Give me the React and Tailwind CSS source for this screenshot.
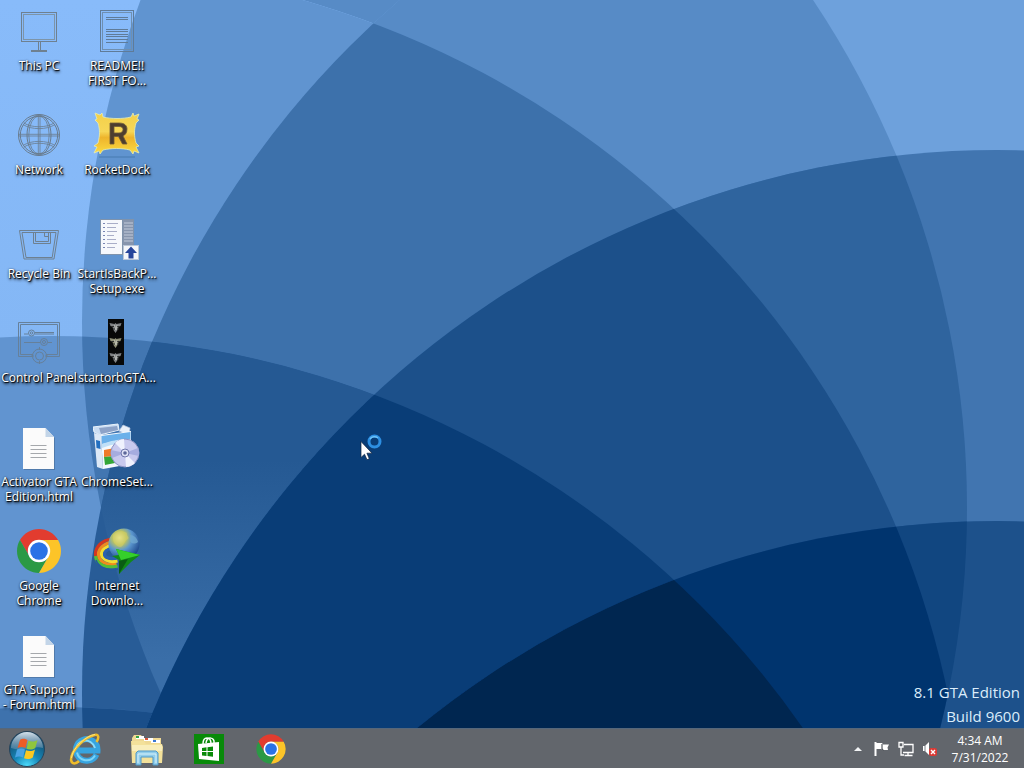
import { useId } from "react"

// big overlapping discs of the wallpaper, one stack leans in from each side
const DISCS = {
    leftTop: [52, 508],
    leftMid: [52, 880],
    leftLow: [52, 1251],
    leftEnd: [52, 1622],
    rightTop: [997, 322],
    rightHigh: [997, 693],
    rightMid: [997, 1065],
    rightLow: [997, 1436],
}

// painted back to front, every entry fills the overlap of its discs
const REGIONS = [
    [["rightTop"], "#6ea1dc"],
    [["leftTop"], "#86b9f8"],
    [["leftTop", "rightTop"], "#578bc6"],
    [["leftTop", "leftMid"], "url(#skyLeft)"],
    [["leftTop", "leftMid", "rightTop"], "#6094d0"],
    [["rightTop", "rightHigh"], "#6ea1dc"],
    [["leftTop", "rightTop", "rightHigh"], "#578bc6"],
    [["leftTop", "leftMid", "rightTop", "rightHigh"], "#3d71ab"],
    [["leftLow"], "#6194d0"],
    [["leftLow", "rightTop"], "#4276b1"],
    [["leftLow", "rightHigh"], "#285c97"],
    [["leftLow", "rightTop", "rightHigh"], "url(#lowWedge)"],
    [["leftEnd"], "#3e72ad"],
    [["leftEnd", "rightHigh"], "#1a4e89"],
    [["rightMid"], "#4175b0"],
    [["rightMid", "leftTop"], "#2f649e"],
    [["rightMid", "leftTop", "leftMid"], "#1c508a"],
    [["rightMid", "leftLow"], "#093d77"],
    [["rightLow"], "#1d518b"],
    [["rightLow", "leftTop"], "#114680"],
    [["rightLow", "leftTop", "leftMid"], "#00346e"],
    [["rightLow", "leftLow"], "#002650"],
]

function Overlap({ discs, fill }) {
    const [first, ...rest] = discs
    const [cx, cy] = DISCS[first]
    return rest.reduce(
        (inner, name) => <g clipPath={`url(#clip-${name})`}>{inner}</g>,
        <circle cx={cx} cy={cy} r="915" fill={fill} />
    )
}

function Wallpaper() {
    return (
        <svg
            className="absolute inset-0 h-full w-full"
            viewBox="0 0 1024 728"
            preserveAspectRatio="xMidYMid slice"
            aria-hidden="true"
        >
            <defs>
                {Object.entries(DISCS).map(([name, [cx, cy]]) => (
                    <clipPath key={name} id={`clip-${name}`}>
                        <circle cx={cx} cy={cy} r="915" />
                    </clipPath>
                ))}
                <linearGradient id="skyLeft" gradientUnits="userSpaceOnUse" x1="0" y1="0" x2="0" y2="340">
                    <stop offset="0" stopColor="#88bbfa" />
                    <stop offset="1" stopColor="#84b7f5" />
                </linearGradient>
                <linearGradient id="lowWedge" gradientUnits="userSpaceOnUse" x1="0" y1="460" x2="0" y2="660">
                    <stop offset="0" stopColor="#255993" />
                    <stop offset="1" stopColor="#3a6ea8" />
                </linearGradient>
            </defs>
            <rect width="1024" height="728" fill="#86b9f7" />
            {REGIONS.map(([discs, fill]) => (
                <Overlap key={discs.join()} discs={discs} fill={fill} />
            ))}
        </svg>
    )
}

/* ---------- desktop icons, all on a 48px grid ---------- */

function PcIcon() {
    return (
        <svg viewBox="0 0 48 48" className="h-12 w-12" fill="none" stroke="#6e8090">
            <rect x="6.500" y="5.500" width="35" height="29" />
            <rect x="8.500" y="7.500" width="31" height="25" stroke="#7d94a8" />
            <path d="M23.500 35v8M25.500 35v8M16 43.500h16M16 44.500h16" />
        </svg>
    )
}

function ReadmeIcon() {
    return (
        <svg viewBox="0 0 48 48" className="h-12 w-12" fill="none" stroke="#5f7b98">
            <rect x="7.500" y="3.500" width="33" height="41" />
            <rect x="9.500" y="5.500" width="29" height="37" stroke="#6f8fb0" />
            <path d="M13 10.500h22M13 12.500h22M13 22.500h22M13 24.500h22M13 27.500h22M13 29.500h22M13 32.500h22M13 35.500h22" />
        </svg>
    )
}

function NetworkIcon() {
    return (
        <svg viewBox="0 0 48 48" className="h-12 w-12" fill="none" stroke="#697c8e">
            <circle cx="24" cy="24" r="20.500" />
            <circle cx="24" cy="24" r="18.700" />
            <ellipse cx="24" cy="24" rx="12" ry="20" />
            <ellipse cx="24" cy="24" rx="10.200" ry="19" strokeWidth=".8" />
            <path d="M23.300 4v40M25 4v40M4 23.300h40M4 25h40" strokeWidth=".8" />
            <path d="M9 12c7 5 23 5 30 0M8 13.500c8 5.500 24 5.500 32 0M9 36c7-5 23-5 30 0M8 34.500c8-5.500 24-5.500 32 0" strokeWidth=".8" />
        </svg>
    )
}

function RecycleIcon() {
    return (
        <svg viewBox="0 0 48 48" className="h-12 w-12" fill="none" stroke="#6e8090">
            <path d="M4.500 15.500h39L39 44H9z" />
            <path d="M7 17.500h34l-3.800 25H11z" />
            <path d="M18.500 17.500v11h17v-11M20.500 17.500v9h13v-9M29.500 17.500v4h4" />
        </svg>
    )
}

function ControlIcon() {
    return (
        <svg viewBox="0 0 48 48" className="h-12 w-12" fill="none" stroke="#66809a">
            <path d="M18 37.500H3.500v-34h41v34H31M18 35.500H5.500v-30h37v30H31" />
            <path d="M20 13.500h19M9 15h4M20 15h19M9 23.500h16M33 23.500h4" />
            <circle cx="16.500" cy="14" r="3" />
            <circle cx="16.500" cy="14" r="1.200" />
            <circle cx="29" cy="23" r="3.500" />
            <circle cx="29" cy="23" r="1.500" />
            <circle cx="24.500" cy="37" r="7" />
            <circle cx="24.500" cy="37" r="4" />
            <path d="M24.500 28v3M24.500 42v3M16 37h3M30 37h3" />
        </svg>
    )
}

function HtmlIcon() {
    return (
        <svg viewBox="0 0 48 48" className="h-12 w-12">
            <path d="M9 6h21.500l9.500 9v32H9z" fill="#3f5f85" opacity=".5" />
            <path d="M8 5h22.500l8.500 9v32H8z" fill="#fbfbfb" />
            <path d="M30.500 5v9H39z" fill="#c3d5e8" />
            <path d="M15.500 22.500h16M15.500 26.500h16M15.500 30.500h16M15.500 34.500h16" stroke="#a5a8ac" />
        </svg>
    )
}

function ChromeIcon({ className }) {
    return (
        <svg viewBox="0 0 48 48" className={className}>
            <path d="M4.950 13A22 22 0 0 1 43.050 13H24A11 11 0 0 0 14.470 29.500z" fill="#e23c2f" />
            <path d="M4.950 13A22 22 0 0 0 24 46l9.530-16.500a11 11 0 0 1-19.060 0z" fill="#2b9945" />
            <path d="M43.050 13A22 22 0 0 1 24 46l9.530-16.500A11 11 0 0 0 24 13z" fill="#fcc428" />
            <circle cx="24" cy="24" r="11.200" fill="#fff" />
            <circle cx="24" cy="24" r="8.800" fill="#2a72e6" />
        </svg>
    )
}

function RocketDockIcon() {
    const id = useId()
    return (
        <svg viewBox="0 0 48 48" className="h-12 w-12">
            <defs>
                <linearGradient id={id} x1="0" y1="0" x2="0" y2="1">
                    <stop offset="0" stopColor="#f3d04a" />
                    <stop offset=".45" stopColor="#f7d757" />
                    <stop offset=".6" stopColor="#eeb42c" />
                    <stop offset="1" stopColor="#fbdc42" />
                </linearGradient>
            </defs>
            <path d="M6 46h36" stroke="#477ab0" />
            <path
                d="M2 2l5 2 2-2 1 4c8 2 20 2 28 0l2-4 1 3 5-2-2 5 2 1-3 3c-2 7-2 13 0 20l3 3-3 1 3 6-5-2-1 3-3-4c-8-2-19-2-27 0l-3 4-1-3-5 2 3-6-3-1 4-3c2-8 2-13 0-20L2 9l2-1z"
                fill={`url(#${id})`}
                stroke="#e4ecb4"
                strokeWidth=".8"
            />
            <path
                fillRule="evenodd"
                d="M17 12h9c6 0 8 3 8 6 0 4-2 6-4 7l4 8h-4.500l-4-7.500H21V33h-4zM21 15.500v6.500h5c2.500 0 4-1.500 4-3.500s-1.500-3-4-3z"
                fill="#4d3d2f"
                stroke="#6f5a38"
                strokeWidth=".8"
            />
        </svg>
    )
}

function SetupIcon() {
    return (
        <svg viewBox="0 0 48 48" className="h-12 w-12">
            <rect x="7" y="4" width="34" height="36" fill="#7f93ac" />
            <rect x="8" y="5" width="21" height="34" fill="#f6f8fc" />
            <rect x="30" y="5" width="10" height="34" fill="#8795ad" />
            <path d="M31 8h9M31 11h9M31 14h9M31 17h9M31 20h9M31 23h9M31 26h9" stroke="#c2cbdb" />
            <path d="M11 8v28" stroke="#4f5f9a" strokeDasharray="1 3" strokeWidth="1.500" />
            <path d="M14 8.500h11M14 12.500h9M14 16.500h10M14 20.500h7M14 24.500h9M14 28.500h10M14 32.500h8" stroke="#a9aec8" />
            <rect x="30.500" y="30.500" width="15" height="14" fill="#f4f6fa" stroke="#b9c6d8" />
            <path d="M38 31.500l6 6.500h-3.500v5.500h-5V38H32z" fill="#26459b" />
        </svg>
    )
}

function StartOrbIcon() {
    return (
        <svg viewBox="0 0 48 48" className="h-12 w-12">
            <rect x="15" y="0" width="16" height="46" fill="#070808" />
            {[2, 17, 32].map((y, i) => (
                <g key={y} transform={`translate(15 ${y})`} fill={i === 1 ? "#8f9078" : "#808385"}>
                    <path d="M1.500 2l5 1 1-1 1 1 5-1-1 3-2 1-1 3-2 3-2-3-1-3-2-1z" />
                    <path d="M3 5.500h3M9 5.500h3M5 8h2M9 8h2" stroke="#2b2d2c" />
                    <path d="M6.500 4l1.500 5 1-5" stroke="#cfd1cb" strokeWidth=".7" fill="none" />
                </g>
            ))}
        </svg>
    )
}

function InstallerIcon() {
    return (
        <svg viewBox="0 0 48 48" className="h-12 w-12">
            <path d="M0 4l25-3 1 6-19 5-6-3z" fill="#c9dcf2" stroke="#eaf3fc" />
            <path d="M6 5l18-2 1 4-17 4z" fill="#8da3c8" />
            <path d="M26 8l4-6 7 3-1 7z" fill="#e9f0fa" stroke="#b4c6df" strokeWidth=".7" />
            <path d="M1 10l7 2 2 34-6-2z" fill="#dce8f6" />
            <path d="M3 17l4 1 .5 8-4-1z" fill="#226fc0" />
            <path d="M8 12l30-4v33L10 46z" fill="#f3f8fd" />
            <path d="M8.500 13l29-4v7c-11 0-19 3-28.500 5z" fill="#6ab0ea" />
            <path d="M9 21c8-3 17-5 28-5v4c-12 0-20 2-28 5z" fill="#bfe0f8" />
            <path d="M11 27l11-2v8l-11 1z" fill="#ef7a2a" />
            <path d="M11 34l11-1v7l-10 2z" fill="#34a637" />
            <circle cx="32" cy="30" r="14" fill="#c8c9ee" stroke="#8d93c4" />
            <path d="M32 30L22 20a14 14 0 0 1 9-4zM32 30l10 10a14 14 0 0 1-9 4z" fill="#eff1fd" />
            <path d="M32 30l13-5a14 14 0 0 1 1 8zM32 30l-13 5a14 14 0 0 1-1-8z" fill="#a6acdf" />
            <circle cx="32" cy="30" r="4" fill="#dfe1f5" stroke="#6f76ab" />
            <circle cx="32" cy="30" r="1.800" fill="#5c6798" />
        </svg>
    )
}

function DownloadManagerIcon() {
    const id = useId()
    return (
        <svg viewBox="0 0 48 48" className="h-12 w-12">
            <defs>
                <radialGradient id={id} cx=".35" cy=".3" r=".75">
                    <stop offset="0" stopColor="#f2f0a4" />
                    <stop offset=".3" stopColor="#b9c264" />
                    <stop offset=".55" stopColor="#5c97cf" />
                    <stop offset="1" stopColor="#1b4488" />
                </radialGradient>
            </defs>
            <g fill="none" strokeWidth="3.200">
                <path d="M19 12C9 13 2.500 20 2.500 27c0 4 2 6 4 8" stroke="#d4371f" />
                <path d="M20 15C11 16 5.500 22 5.500 27c0 7 7 12 18 10" stroke="#f08a1e" />
                <path d="M20 18c-7 1-11.500 5-11.500 9 0 5 7 9 16 7" stroke="#f2dc32" />
                <path d="M2.500 29c1 8 10 13 22 10" stroke="#55bd38" />
                <path d="M21 21c-6 1-9.500 3-9.500 6 0 4 6 5.500 12 4" stroke="#2a62b0" />
            </g>
            <path d="M3 33c3 8 12 11 22 9" fill="none" stroke="#245a9e" strokeWidth="1.500" />
            <circle cx="31" cy="17" r="15.500" fill={`url(#${id})`} />
            <path d="M20 8c4-4 9-5 14-2-1 3 3 4 1 6-4 2-4 8-8 8-5-1-8-6-7-12z" fill="#d9d264" opacity=".5" />
            <path d="M37 8c4 0 7 3 8 7-4 3-8 1-8-2z" fill="#6fa8cf" opacity=".8" />
            <path d="M23 22l24 6-9 7-12 12v-14l-7-4 7-1z" fill="#118a17" />
            <path d="M23 22l24 6-19 5z" fill="#35cf2b" />
            <path d="M26 34l9-2-9 15z" fill="#0a5c14" />
        </svg>
    )
}

const columns = [
    [
        { icon: PcIcon, lines: ["This PC"] },
        { icon: NetworkIcon, lines: ["Network"] },
        { icon: RecycleIcon, lines: ["Recycle Bin"] },
        { icon: ControlIcon, lines: ["Control Panel"] },
        { icon: HtmlIcon, lines: ["Activator GTA", "Edition.html"] },
        { icon: ChromeIcon, lines: ["Google", "Chrome"] },
        { icon: HtmlIcon, lines: ["GTA Support", "- Forum.html"] },
    ],
    [
        { icon: ReadmeIcon, lines: ["README!!", "FIRST FO..."] },
        { icon: RocketDockIcon, lines: ["RocketDock"] },
        { icon: SetupIcon, lines: ["StartIsBackP...", "Setup.exe"] },
        { icon: StartOrbIcon, lines: ["startorbGTA..."] },
        { icon: InstallerIcon, lines: ["ChromeSet..."] },
        { icon: DownloadManagerIcon, lines: ["Internet", "Downlo..."] },
    ],
]

function DesktopIcon({ icon: Icon, lines }) {
    return (
        <button className="flex h-[104px] w-full flex-col items-center gap-[3px] pt-[7px] text-xs leading-[15px] text-white [text-shadow:1px_1px_1px_#000,1px_2px_3px_#000,0_0_2px_#0008]">
            <Icon className="h-12 w-12" />
            <span className="whitespace-nowrap">
                {lines.map((line) => (
                    <span key={line} className="block">{line}</span>
                ))}
            </span>
        </button>
    )
}

/* ---------- taskbar ---------- */

function StartOrb() {
    return (
        <svg viewBox="0 0 36 36" className="h-9 w-9">
            <defs>
                <radialGradient id="orb" cx=".5" cy="1" r=".95">
                    <stop offset="0" stopColor="#4fe0ff" />
                    <stop offset=".4" stopColor="#1787b8" />
                    <stop offset="1" stopColor="#12405f" />
                </radialGradient>
                <linearGradient id="orbShine" x1="0" y1="0" x2="0" y2="1">
                    <stop offset="0" stopColor="#d5e2ec" />
                    <stop offset="1" stopColor="#6f93ad" stopOpacity=".5" />
                </linearGradient>
            </defs>
            <circle cx="18" cy="18" r="17.500" fill="url(#orb)" stroke="#26435a" />
            <path d="M2 17a16 16 0 0 1 32 0c-9-3-21 4-32 0z" fill="url(#orbShine)" />
            <path d="M11 9c3-2 5-1 7.500 0l-2 8c-2.500-1.500-5-1.500-8 0z" fill="#ec5b27" />
            <path d="M19.500 9.800c3 1.200 6 1.200 9-.8l-2.200 8c-3 2-6 2-8.800.8z" fill="#8fc63e" />
            <path d="M8 18.500c3-1.500 5.500-1.500 8 0l-2 8c-2.500-1.500-5-1.500-8 0z" fill="#4aa3e4" />
            <path d="M17 19.200c3 1.200 6 1.200 9-.8l-2.200 8c-3 2-6 2-8.800.8z" fill="#fcc822" />
        </svg>
    )
}

function ExplorerE() {
    return (
        <svg viewBox="0 0 36 36" className="h-9 w-9" fill="none">
            <path d="M29.500 23.500a10.800 10.800 0 1 1 1-4H12" stroke="#37a4e0" strokeWidth="6" />
            <path d="M28 24.500a9.800 9.800 0 0 1-18-3" stroke="#7dd5f8" strokeWidth="2" />
            <path d="M9.500 16c2-6 9-8 14-5 3 2 4 4 4.500 6" stroke="#8bdcfa" strokeWidth="2" />
            <path d="M29.500 11c3-5 2-8-2-7C18 6 4 19 4 29c1 5 5 4 8 1" stroke="#f0bd2a" strokeWidth="2.500" />
            <path d="M28 3.500C20 4 5 17 4.500 27" stroke="#fbe584" />
        </svg>
    )
}

function FolderIcon() {
    return (
        <svg viewBox="0 0 36 36" className="h-9 w-9">
            <path d="M3 7l2-3h7l2 3h18v25H3z" fill="#efd994" />
            <path d="M7 5h8v3H7z" fill="#fff" />
            <path d="M7 5h3v2H7z" fill="#32a544" />
            <path d="M15 7h9v3h-9z" fill="#fff" />
            <path d="M16 7h3v2h-3z" fill="#d9573a" />
            <path d="M22 9h9v3h-9z" fill="#fff" />
            <path d="M24 9h3v2h-3z" fill="#3a78d4" />
            <path d="M2 10h13l2 3h16l1 3-1 16H3z" fill="#f3e19a" />
            <path d="M3 14h30v6H3z" fill="#f9eebb" />
            <path d="M7 34V22l2-2h18l2 2v12h-5v-8H12v8z" fill="#91cdea" stroke="#4f98c6" />
            <path d="M9 32v-9h18v9" fill="none" stroke="#d8f2fb" />
        </svg>
    )
}

function StoreIcon() {
    return (
        <svg viewBox="0 0 30 30" className="h-[30px] w-[30px]">
            <path d="M0 0h30v30H0z" fill="#088a09" />
            <path d="M4 10l21-2v19L5 25z" fill="#fff" />
            <path d="M9 10c0-8 8-8 8 0M12 9c1-7 9-6 8 0" fill="none" stroke="#fff" strokeWidth="1.500" />
            <path d="M8 14l4.500-.7V17H8zM13.500 13.200l5.500-.7V17h-5.500zM8 18h4.500v4L8 21.500zM13.500 18H19v4.800l-5.500-.7z" fill="#088a09" />
        </svg>
    )
}

const pinned = [
    { name: "Internet Explorer", art: <ExplorerE /> },
    { name: "File Explorer", art: <FolderIcon /> },
    { name: "Store", art: <StoreIcon /> },
    { name: "Google Chrome", art: <ChromeIcon className="h-8 w-8" /> },
]

function Tray() {
    return (
        <div className="flex items-center">
            <button aria-label="Show hidden icons" className="flex w-6 justify-center">
                <svg viewBox="0 0 8 6" className="h-1.5 w-2"><path d="M0 5l4-4 4 4z" fill="#f2f4f5" /></svg>
            </button>
            <button aria-label="Action Center" className="flex w-6 justify-center">
                <svg viewBox="0 0 16 16" className="h-4 w-4">
                    <path d="M1.500 1v14" stroke="#fff" strokeWidth="2" />
                    <path d="M2 2h6l1 1.500h6l-1.500 3L14 9H8.500L7.500 8H2z" fill="#fff" />
                    <path d="M8 3v5l1.500 1" stroke="#33383e" fill="none" />
                </svg>
            </button>
            <button aria-label="Network" className="flex w-6 justify-center">
                <svg viewBox="0 0 16 16" className="h-4 w-4" fill="none" stroke="#fff" strokeWidth="1.300">
                    <path d="M6 3.500h9v8H5M10 12v2.500M6.500 14.500h8" />
                    <path d="M1 1.500h4v4.500H1zM3 6v8h3" />
                </svg>
            </button>
            <button aria-label="Volume" className="flex w-6 justify-center">
                <svg viewBox="0 0 16 16" className="h-4 w-4">
                    <path d="M1 5h2l4-4v13l-4-4H1z" fill="#fff" />
                    <path d="M3 4.500v6" stroke="#7d8288" />
                    <rect x="7" y="7" width="8" height="8" rx="2" fill="#d93a35" />
                    <path d="M9 9l4 4M13 9l-4 4" stroke="#fff" strokeWidth="1.400" />
                </svg>
            </button>
            <button className="w-[76px] text-center text-xs leading-[17px] text-white">
                <span className="block">4:34 AM</span>
                <span className="block">7/31/2022</span>
            </button>
        </div>
    )
}

function Taskbar() {
    return (
        <footer className="relative flex h-10 shrink-0 items-stretch justify-between border-t border-[#55677b] bg-[#62666c] pr-1.5">
            <nav className="flex items-center">
                <button aria-label="Start" className="flex w-[54px] justify-center"><StartOrb /></button>
                {pinned.map(({ name, art }) => (
                    <button key={name} aria-label={name} className="flex w-[62px] justify-center">{art}</button>
                ))}
            </nav>
            <Tray />
        </footer>
    )
}

function BusyPointer() {
    return (
        <svg viewBox="0 0 24 28" className="absolute left-[360px] top-[433px] h-7 w-6" aria-hidden="true">
            <circle cx="14.500" cy="8.500" r="5.500" fill="none" stroke="#2d8fe2" strokeWidth="3" />
            <path d="M10 6a5.500 5.500 0 0 1 8-1" fill="none" stroke="#6dc3f7" strokeWidth="1.500" />
            <path d="M1 8.500v16l3.500-3.300 2.500 5.500 2.300-1-2.400-5.500H12z" fill="#fff" stroke="#10233d" strokeWidth=".7" />
        </svg>
    )
}

export default function App() {
    return (
        <div className="flex h-screen flex-col overflow-hidden font-['Open_Sans','Noto_Sans',sans-serif]">
            <main className="relative flex min-h-0 flex-1 justify-between">
                <Wallpaper />

                <div className="relative flex">
                    {columns.map((items, i) => (
                        <div key={i} className="w-[78px]">
                            {items.map((item) => (
                                <DesktopIcon key={item.lines.join()} {...item} />
                            ))}
                        </div>
                    ))}
                </div>

                <div className="relative self-end pr-1 text-right text-[15px] leading-6 text-[#dcedfb]">
                    <p>8.1 GTA Edition</p>
                    <p>Build 9600</p>
                </div>

                <BusyPointer />
            </main>
            <Taskbar />
        </div>
    )
}
